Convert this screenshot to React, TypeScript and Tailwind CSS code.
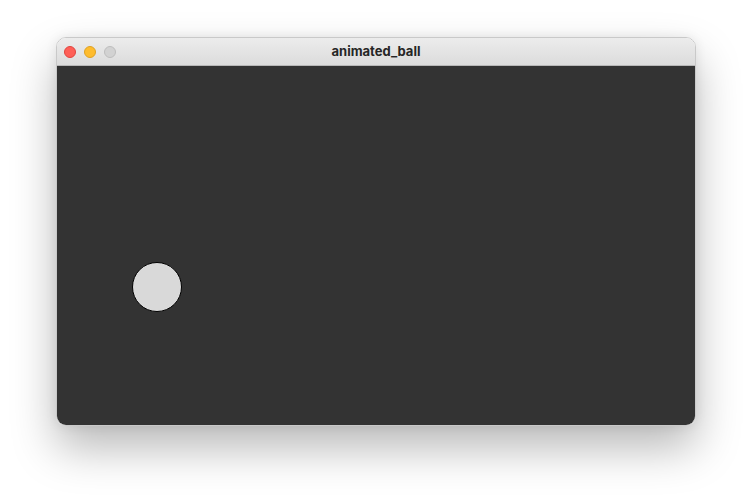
import React from 'react';

const App: React.FC = () => {
  return (
    <div className="w-[752px] h-[500px] bg-white flex justify-center pt-[37px]" style={{ fontFamily: 'Inter, "Liberation Sans", sans-serif' }}>
      {/* Window */}
      <div className="w-[640px] h-[389px] rounded-[10px] overflow-hidden flex flex-col border border-[#c9c9c9] shadow-[0_22px_45px_rgba(0,0,0,0.28),0_0_12px_rgba(0,0,0,0.08)]">
        {/* Title bar */}
        <div className="relative h-[28px] shrink-0 flex items-center bg-gradient-to-b from-[#ececec] to-[#dcdcdc] border-b border-[#b8b8b8]">
          <div className="flex items-center gap-[8px] pl-[7px]">
            <span className="w-[12px] h-[12px] rounded-full bg-[#fe5f57] border border-[#e0443e]" />
            <span className="w-[12px] h-[12px] rounded-full bg-[#febc2e] border border-[#dea123]" />
            <span className="w-[12px] h-[12px] rounded-full bg-[#d2d2d2] border border-[#bdbdbd]" />
          </div>
          <div className="absolute inset-0 flex items-center justify-center text-[13px] font-bold text-[#262626]">
            animated_ball
          </div>
        </div>
        {/* Canvas */}
        <div className="flex-1 bg-[#333333] pl-[75px] pt-[196px]">
          <div className="w-[50px] h-[50px] rounded-full bg-[#d9d9d9] border border-black" />
        </div>
      </div>
    </div>
  );
};

export default App;
